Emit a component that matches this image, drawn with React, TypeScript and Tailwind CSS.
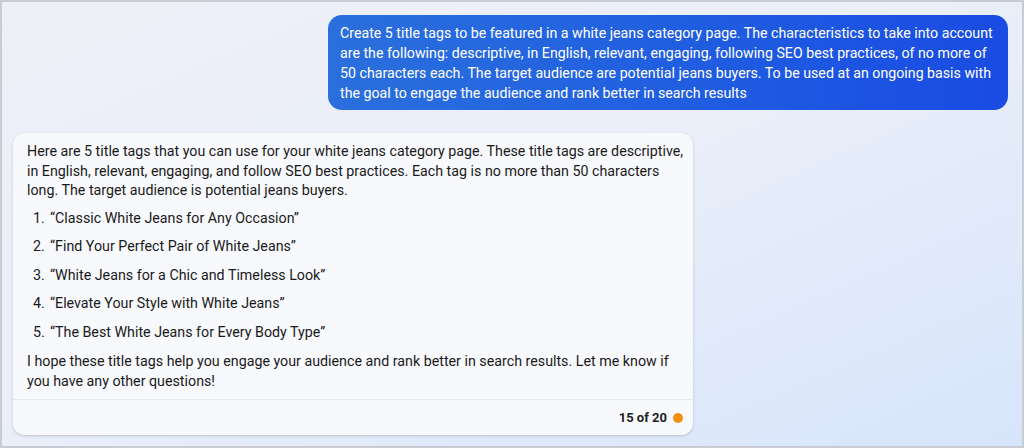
const titles = [
  "“Classic White Jeans for Any Occasion”",
  "“Find Your Perfect Pair of White Jeans”",
  "“White Jeans for a Chic and Timeless Look”",
  "“Elevate Your Style with White Jeans”",
  "“The Best White Jeans for Every Body Type”",
];

export default function App() {
  return (
    <div className="h-[448px] w-[1024px] overflow-hidden border-2 border-[#c9ccd3] bg-gradient-to-br from-[#eef0f7] via-[#e9eef9] to-[#d7e5fb] font-['Roboto',sans-serif]">
      <div className="flex flex-col pl-[11px] pt-[13px]">
        <div className="flex justify-end pr-[14px]">
          <div className="w-[680px] whitespace-nowrap rounded-[14px] bg-gradient-to-r from-[#2b6fdd] to-[#1a4be3] px-[12px] pt-[8px] pb-[7px] text-[14.2px] leading-[20px] text-white">
            Create 5 title tags to be featured in a white jeans category page. The characteristics to take into account
            <br />
            are the following: descriptive, in English, relevant, engaging, following SEO best practices, of no more of
            <br />
            50 characters each. The target audience are potential jeans buyers. To be used at an ongoing basis with
            <br />
            the goal to engage the audience and rank better in search results
          </div>
        </div>

        <div className="mt-[23px] w-[680px] rounded-[12px] bg-[#f8f9fc] shadow-[0_1px_3px_rgba(0,0,0,0.18)]">
          <div className="whitespace-nowrap px-[14px] pt-[9px] pb-[8px] text-[14.25px] leading-[19.5px] text-[#1a1a1a]">
            <p>
              Here are 5 title tags that you can use for your white jeans category page. These title tags are descriptive,
              <br />
              in English, relevant, engaging, and follow SEO best practices. Each tag is no more than 50 characters
              <br />
              long. The target audience is potential jeans buyers.
            </p>
            <ol className="mt-[8px] flex flex-col gap-[9px]">
              {titles.map((t, i) => (
                <li key={i} className="flex pl-[6px]">
                  <span className="w-[17px]">{i + 1}.</span>
                  <span>{t}</span>
                </li>
              ))}
            </ol>
            <p className="mt-[10px]">
              I hope these title tags help you engage your audience and rank better in search results. Let me know if
              <br />
              you have any other questions!
            </p>
          </div>
          <div className="flex h-[36px] items-center justify-end gap-[6px] border-t border-[#e6e8ee] pr-[10px] text-[13px] font-bold text-[#222]">
            <span>15 of 20</span>
            <span className="h-[10px] w-[10px] rounded-full bg-[#f0900f]" />
          </div>
        </div>
      </div>
    </div>
  );
}
